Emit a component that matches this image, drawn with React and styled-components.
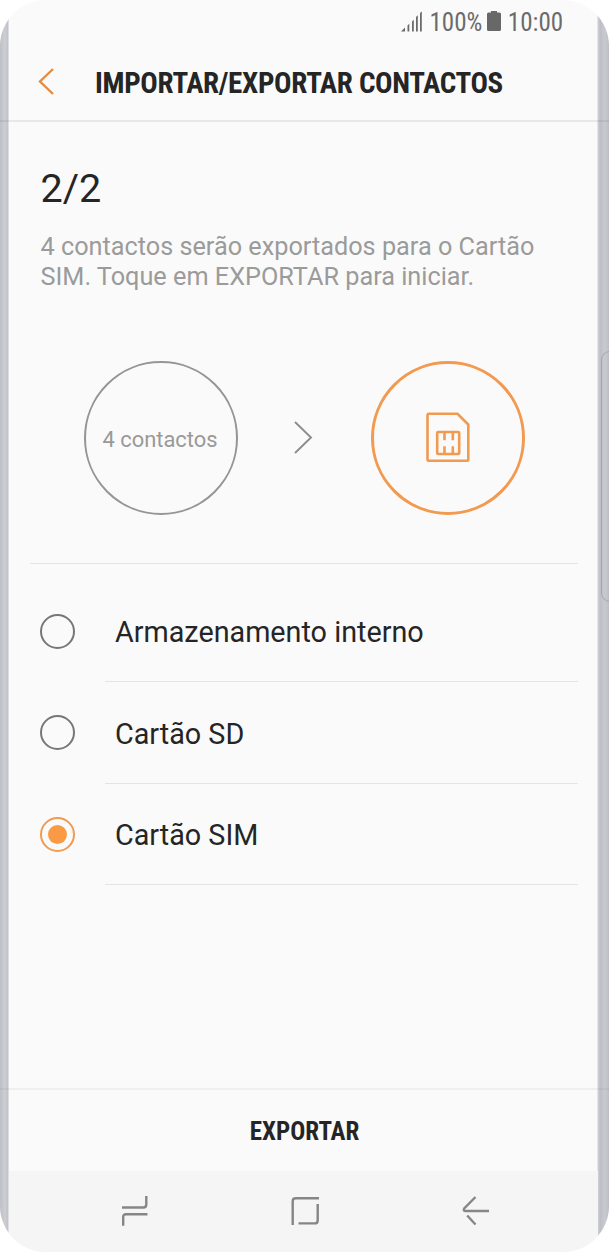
import React, { useState } from "react";
import styled, { createGlobalStyle } from "styled-components";

const options = [
  { id: "internal", label: "Armazenamento interno" },
  { id: "sd", label: "Cartão SD" },
  { id: "sim", label: "Cartão SIM" }
];

const App = () => {
  const [selected, setSelected] = useState("sim");

  return (
    <Phone>
      <GlobalStyle />
      <StatusBar>
        <SignalIcon />
        <StatusText>100%</StatusText>
        <BatteryIcon />
        <StatusText>10:00</StatusText>
      </StatusBar>

      <Header>
        <BackButton aria-label="Voltar">
          <svg width="18" height="28" viewBox="0 0 18 28" fill="none">
            <path d="M16 1L3 13.5L16 26" stroke="#e58c40" strokeWidth="2.4" />
          </svg>
        </BackButton>
        <Title>IMPORTAR/EXPORTAR CONTACTOS</Title>
      </Header>

      <Content>
        <Step>2/2</Step>
        <Description>
          4 contactos serão exportados para o Cartão
          <br />
          SIM. Toque em EXPORTAR para iniciar.
        </Description>

        <Transfer>
          <Circle>4 contactos</Circle>
          <svg width="20" height="34" viewBox="0 0 20 34" fill="none">
            <path d="M1 1L17 16.5L1 32" stroke="#8c8c8c" strokeWidth="1.9" />
          </svg>
          <Circle $active>
            <SimIcon />
          </Circle>
        </Transfer>

        <Options>
          {options.map((option) => (
            <Option key={option.id} onClick={() => setSelected(option.id)}>
              <Radio $checked={selected === option.id} />
              <Label>{option.label}</Label>
            </Option>
          ))}
        </Options>
      </Content>

      <Footer>
        <ExportButton>EXPORTAR</ExportButton>
      </Footer>

      <NavBar>
        <NavIcon viewBox="0 0 28 32">
          <path d="M2 13.5H23.3Q26.3 13.5 26.3 10.5V2" />
          <path d="M27.5 20.2H6.2Q3.2 20.2 3.2 23.2V31.8" />
        </NavIcon>
        <NavIcon viewBox="0 0 28 32">
          <path d="M1.7 31V7.3Q1.7 4.3 4.7 4.3H28" />
          <path d="M26.7 10V26.4Q26.7 29.4 23.7 29.4H7.500" />
        </NavIcon>
        <NavIcon viewBox="0 0 28 32">
          <path d="M13.5 3L2.2 14.5Q1 17 3.5 17H27" />
          <path d="M5.2 21.5L13.5 30.5" />
        </NavIcon>
      </NavBar>
      <EdgeHandle />
    </Phone>
  );
};

const SignalIcon = () => (
  <svg width="22" height="22" viewBox="0 0 22 22" fill="#6b6b6b">
    <path d="M0 20.5L4 16.5V20.5Z" />
    <path d="M6.5 14.5L8.3 12.7V20.5H6.5Z" />
    <path d="M11 10.5L12.8 8.7V20.5H11Z" />
    <path d="M15 6L16.8 4.2V20.5H15Z" />
    <path d="M19 2L20.8 0.5V20.5H19Z" />
  </svg>
);

const BatteryIcon = () => (
  <svg width="14" height="22" viewBox="0 0 14 22" fill="#686868">
    <path d="M4 0H10V1.5H12.5Q14 1.5 14 3V18.5Q14 20 12.5 20H1.5Q0 20 0 18.5V3Q0 1.5 1.5 1.5H4Z" />
  </svg>
);

const SimIcon = () => (
  <svg width="44" height="50" viewBox="0 0 44 50" fill="none" stroke="#f19a50" strokeWidth="2.6">
    <path d="M3 0.800H31.500L42.300 11.500V46.200Q42.300 47.700 40.800 47.700H3Q1.500 47.700 1.500 46.200V2.300Q1.500 0.800 3 0.800Z" />
    <rect x="11.200" y="19" width="22" height="22" rx="1" />
    <path d="M18.500 19V27.300M26.800 19V27.300M18.500 41V33.300M26.800 41V33.300" />
  </svg>
);

export default App;

const GlobalStyle = createGlobalStyle`
  * {
    box-sizing: border-box;
  }
  body {
    margin: 0;
    background: #fff;
    font-family: Roboto, "Liberation Sans", sans-serif;
  }
  button {
    padding: 0;
    border: none;
    background: none;
    font: inherit;
    cursor: pointer;
  }
  svg {
    display: block;
    flex-shrink: 0;
    overflow: visible;
  }
`;

const Phone = styled.div`
  position: relative;
  display: flex;
  flex-direction: column;
  width: 609px;
  height: 1252px;
  overflow: hidden;
  border-radius: 46px;
  color: #252525;
  background: linear-gradient(
    to right,
    #bfc0c7 0,
    #cdced4 5px,
    #c1c2c9 8px,
    #fafafa 9px,
    #fafafa 597px,
    #d0d0d6 598px,
    #bebec6 600px,
    #c9cad1 605px,
    #bcbdc5 609px
  );
`;

const StatusBar = styled.div`
  display: flex;
  align-items: center;
  height: 44px;
  padding-left: 401px;
`;

const StatusText = styled.span`
  margin: 1px 5px 0 6.5px;
  font-family: "Roboto Condensed", Roboto, sans-serif;
  font-stretch: 75%;
  font-size: 25px;
  line-height: 44px;
  color: #6b6b6b;
`;

const Header = styled.header`
  display: flex;
  align-items: center;
  height: 78px;
  padding-left: 37px;
  border-bottom: 2px solid rgba(60, 60, 65, 0.09);
`;

const BackButton = styled.button`
  width: 58px;
`;

const Title = styled.h1`
  margin: 2px 0 0;
  font-family: "Roboto Condensed", Roboto, sans-serif;
  font-stretch: 75%;
  font-size: 29px;
  font-weight: 700;
  letter-spacing: -0.34px;
  white-space: nowrap;
`;

const Content = styled.main`
  flex: 1;
  padding: 44px 31px 0 30px;
`;

const Step = styled.h2`
  margin: 0 0 0 10.5px;
  font-size: 39.5px;
  line-height: 46px;
  font-weight: 400;
`;

const Description = styled.p`
  margin: 20px 0 0 10.5px;
  font-size: 25.25px;
  line-height: 30px;
  color: #9b9b9b;
  white-space: nowrap;
`;

const Transfer = styled.section`
  display: flex;
  align-items: center;
  justify-content: space-between;
  height: 272px;
  padding: 21px 53px 0 53.5px;
  border-bottom: 1px solid #e4e4e4;
`;

const Circle = styled.div`
  display: flex;
  align-items: center;
  justify-content: center;
  width: 154px;
  height: 154px;
  padding: ${(props) => (props.$active ? "0" : "2px 1px 0 0")};
  border: ${(props) => (props.$active ? "3px solid #f19a50" : "2px solid #959595")};
  border-radius: 50%;
  font-size: 21.9px;
  color: #999;
`;

const Options = styled.div`
  padding-top: 16.5px;
`;

const Option = styled.div`
  display: flex;
  align-items: center;
  height: 101.5px;
  padding-left: 10px;
  background: linear-gradient(#e4e4e4, #e4e4e4) 75px 100% / 100% 1px no-repeat;
  cursor: pointer;
`;

const Radio = styled.span`
  display: flex;
  align-items: center;
  justify-content: center;
  width: 35px;
  height: 35px;
  border: 2px solid ${(props) => (props.$checked ? "#f19a50" : "#777")};
  border-radius: 50%;

  &::after {
    content: "";
    width: 19px;
    height: 19px;
    border-radius: 50%;
    background: ${(props) => (props.$checked ? "#fb9a44" : "transparent")};
  }
`;

const Label = styled.span`
  margin: 2px 0 0 40px;
  font-size: 28.75px;
  line-height: 34px;
`;

const Footer = styled.footer`
  height: 83px;
  border-top: 2px solid rgba(60, 60, 65, 0.06);
`;

const ExportButton = styled.button`
  width: 100%;
  height: 81px;
  padding: 2px 0 0;
  font-family: "Roboto Condensed", Roboto, sans-serif;
  font-stretch: 75%;
  font-size: 25px;
  font-weight: 700;
  color: #252525;
`;

const NavBar = styled.nav`
  display: flex;
  justify-content: space-between;
  height: 81px;
  margin: 0 11px 0 9px;
  padding: 23px 108px 0 111px;
  background: #f5f5f5;
`;

const NavIcon = styled.svg`
  width: 28px;
  height: 32px;
  fill: none;
  stroke: #868686;
  stroke-width: 2.4px;
`;

/* raised strip on the curved edge of the frame */
const EdgeHandle = styled.div`
  position: absolute;
  top: 351px;
  right: -10px;
  width: 18px;
  height: 251px;
  border: 1px solid #a4a5ae;
  border-radius: 10px;
`;
